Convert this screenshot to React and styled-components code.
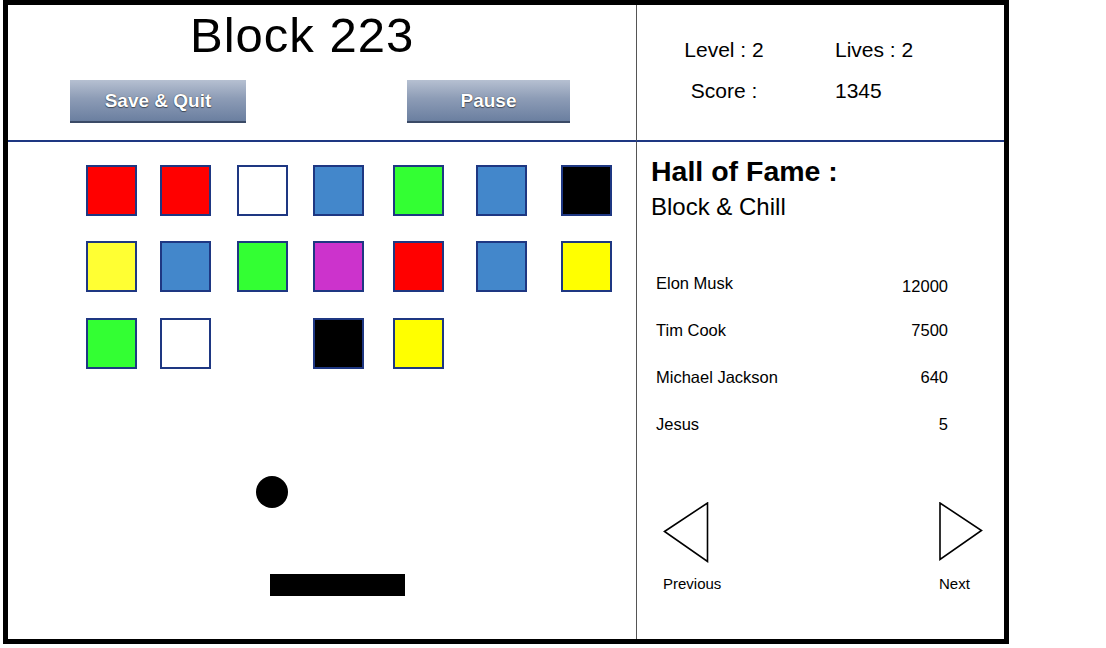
import styled, { createGlobalStyle } from 'styled-components';

const GlobalStyle = createGlobalStyle`
  html, body {
    margin: 0;
    padding: 0;
    background: #fff;
  }

  body {
    font-family: "Liberation Sans", Arial, sans-serif;
    color: #000;
  }
`;

const NAVY = '#1e3782';

const Frame = styled.div`
  box-sizing: border-box;
  display: grid;
  grid-template-columns: 629px 1fr;
  grid-template-rows: 137px 1fr;
  width: 1006px;
  height: 644px;
  margin-left: 3px;
  border: 5px solid #000;
`;

const Header = styled.header`
  box-sizing: border-box;
  display: flex;
  flex-direction: column;
  padding-top: 6px;
  border-right: 1px solid #555;
  border-bottom: 2px solid ${NAVY};
`;

const Title = styled.h1`
  margin: 0;
  padding-left: 182px;
  font-size: 49px;
  font-weight: 400;
  letter-spacing: 1px;
  line-height: 1;
`;

const ButtonRow = styled.div`
  display: flex;
  gap: 161px;
  margin-top: 20px;
  padding-left: 62px;
`;

const Button = styled.button`
  box-sizing: border-box;
  width: ${(p) => p.$width}px;
  height: 43px;
  padding: 0;
  border: none;
  border-bottom: 2px solid #3a4a66;
  background: linear-gradient(#b6c0d1, #8d9cb6 45%, #6b7fa0);
  color: #fff;
  font-family: "Liberation Sans", Arial, sans-serif;
  font-size: 19px;
  font-weight: 700;
  text-shadow: 0 1px 1px rgba(0, 0, 0, 0.45), 0 0 1px rgba(0, 0, 0, 0.6);
  cursor: pointer;
`;

const Stats = styled.section`
  box-sizing: border-box;
  display: grid;
  grid-template-columns: 120px auto;
  grid-auto-rows: 41px;
  column-gap: 51px;
  align-content: start;
  padding: 24px 0 0 27px;
  border-bottom: 2px solid ${NAVY};
  font-size: 21px;
  line-height: 41px;
`;

const Stat = styled.span`
  text-align: ${(p) => (p.$center ? 'center' : 'left')};
  white-space: nowrap;
`;

const Board = styled.main`
  position: relative;
  box-sizing: border-box;
  padding: 23px 0 0 78px;
  border-right: 1px solid #555;
`;

const BlockGrid = styled.div`
  display: grid;
  grid-template-columns: 74px 77px 76px 80px 83px 85px 51px;
  grid-template-rows: 76px 77px 51px;
`;

const Block = styled.div`
  box-sizing: border-box;
  width: 51px;
  height: 51px;
  border: ${(p) => (p.$color ? `2px solid ${NAVY}` : 'none')};
  background: ${(p) => p.$color || 'transparent'};
`;

const Ball = styled.div`
  position: absolute;
  left: 248px;
  top: 334px;
  width: 32px;
  height: 32px;
  border-radius: 50%;
  background: #000;
`;

const Paddle = styled.div`
  position: absolute;
  left: 262px;
  top: 432px;
  width: 135px;
  height: 22px;
  background: #000;
`;

const Fame = styled.aside`
  display: flex;
  flex-direction: column;
  padding: 13px 56px 0 14px;
`;

const FameTitle = styled.h2`
  margin: 0;
  font-size: 28.5px;
  font-weight: 700;
  line-height: 33px;
`;

const FameSubtitle = styled.h3`
  margin: 5px 0 0;
  font-size: 24px;
  font-weight: 400;
  line-height: 28px;
`;

const ScoreList = styled.ul`
  margin: 39px 0 0;
  padding: 0 0 0 5px;
  list-style: none;
  font-size: 16.5px;
  line-height: 47px;
`;

const ScoreRow = styled.li`
  display: flex;
  justify-content: space-between;
`;

const Points = styled.span`
  transform: translateY(${(p) => p.$drop || 0}px);
`;

const Nav = styled.nav`
  display: flex;
  justify-content: space-between;
  align-items: flex-start;
  margin: 54px -35px 0 12px;
`;

const NavItem = styled.button`
  display: flex;
  flex-direction: column;
  align-items: flex-start;
  gap: 12px;
  padding: 0;
  border: none;
  background: none;
  font-family: "Liberation Sans", Arial, sans-serif;
  font-size: 15px;
  line-height: 18px;
  color: #000;
  cursor: pointer;
`;

const blocks = [
  ['#ff0000', '#ff0000', '#ffffff', '#4387cb', '#33ff33', '#4387cb', '#000000'],
  ['#ffff33', '#4387cb', '#33ff33', '#cc33cc', '#ff0000', '#4387cb', '#ffff00'],
  ['#33ff33', '#ffffff', null, '#000000', '#ffff00'],
];

const scores = [
  { name: 'Elon Musk', points: 12000, drop: 3 },
  { name: 'Tim Cook', points: 7500 },
  { name: 'Michael Jackson', points: 640 },
  { name: 'Jesus', points: 5 },
];

const App = () => {
  return (
    <>
      <GlobalStyle />
      <Frame>
        <Header>
          <Title>Block 223</Title>
          <ButtonRow>
            <Button $width={176}>Save &amp; Quit</Button>
            <Button $width={163}>Pause</Button>
          </ButtonRow>
        </Header>

        <Stats>
          <Stat $center>Level : 2</Stat>
          <Stat>Lives : 2</Stat>
          <Stat $center>Score :</Stat>
          <Stat>1345</Stat>
        </Stats>

        <Board>
          <BlockGrid>
            {blocks.map((row, r) =>
              row.map((color, c) => <Block key={`${r}-${c}`} $color={color} />)
            )}
          </BlockGrid>
          <Ball />
          <Paddle />
        </Board>

        <Fame>
          <FameTitle>Hall of Fame :</FameTitle>
          <FameSubtitle>Block &amp; Chill</FameSubtitle>
          <ScoreList>
            {scores.map((s) => (
              <ScoreRow key={s.name}>
                <span>{s.name}</span>
                <Points $drop={s.drop}>{s.points}</Points>
              </ScoreRow>
            ))}
          </ScoreList>
          <Nav>
            <NavItem>
              <svg width="46" height="61" viewBox="0 0 46 61">
                <polygon
                  points="1.5,29.5 44.5,1 44.5,59.5"
                  fill="none"
                  stroke="#000"
                  strokeWidth="1.6"
                />
              </svg>
              Previous
            </NavItem>
            <NavItem>
              <svg width="44" height="61" viewBox="0 0 44 61">
                <polygon
                  points="1,1 1,57.5 42.5,28.5"
                  fill="none"
                  stroke="#000"
                  strokeWidth="1.6"
                />
              </svg>
              Next
            </NavItem>
          </Nav>
        </Fame>
      </Frame>
    </>
  );
};

export default App;
